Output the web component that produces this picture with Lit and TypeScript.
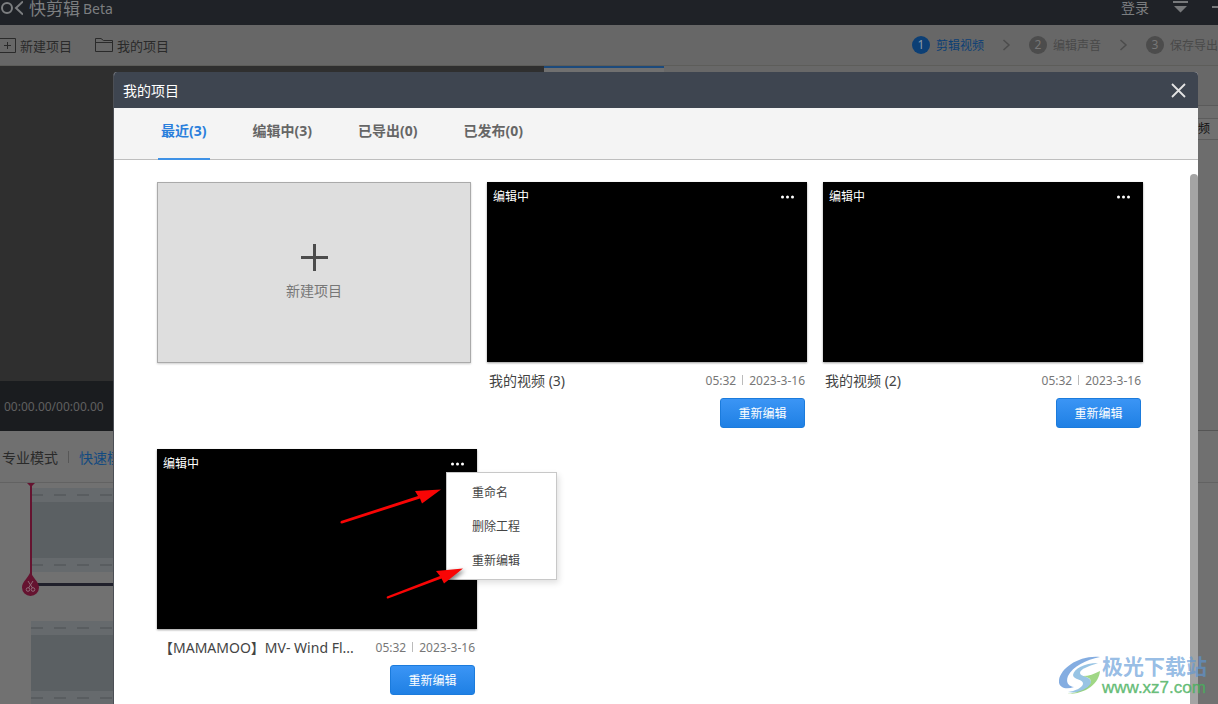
import { LitElement, html, css, svg, nothing } from "lit";
import { customElement, property, state } from "lit/decorators.js";

interface Project {
  name: string;
  duration: string;
  date: string;
  menuOpen?: boolean;
}

const PROJECTS: Project[] = [
  { name: "我的视频 (3)", duration: "05:32", date: "2023-3-16" },
  { name: "我的视频 (2)", duration: "05:32", date: "2023-3-16" },
  { name: "【MAMAMOO】MV- Wind Fl...", duration: "05:32", date: "2023-3-16", menuOpen: true },
];

const TABS = ["最近(3)", "编辑中(3)", "已导出(0)", "已发布(0)"];
const STEPS = ["剪辑视频", "编辑声音", "保存导出"];

const reset = css`
  * {
    box-sizing: border-box;
  }
  button {
    margin: 0;
    padding: 0;
    border: 0;
    background: none;
    font: inherit;
    color: inherit;
    white-space: nowrap;
  }
  svg {
    display: block;
    flex: none;
  }
`;

@customElement("project-card")
class ProjectCard extends LitElement {
  @property({ attribute: false }) project!: Project;

  static styles = [
    reset,
    css`
      :host {
        display: block;
        position: relative;
        width: 320px;
      }
      .thumb {
        display: flex;
        justify-content: space-between;
        align-items: flex-start;
        height: 180px;
        padding: 5px 12px 0 6px;
        background: #000;
        box-shadow: 0 1px 2px rgba(0, 0, 0, 0.4);
        color: #fff;
        font-size: 12px;
        line-height: 20px;
      }
      .more {
        padding: 8px 0;
      }
      .info {
        display: flex;
        justify-content: space-between;
        align-items: center;
        height: 36px;
        padding: 0 2px;
        white-space: nowrap;
      }
      .name {
        font-size: 14px;
        color: #444;
      }
      .meta {
        display: flex;
        align-items: center;
        gap: 6px;
        font-size: 12px;
        color: #777;
      }
      .bar {
        width: 1px;
        height: 10px;
        background: #bbb;
      }
      .actions {
        display: flex;
        justify-content: flex-end;
        padding-right: 2px;
      }
      .edit {
        width: 85px;
        height: 30px;
        border: 1px solid #1b7bdc;
        border-radius: 3px;
        background: linear-gradient(#3b95f5, #1f80e4);
        color: #fff;
        font-size: 12px;
      }
      .menu {
        position: absolute;
        left: 289px;
        top: 23px;
        width: 111px;
        padding: 2px 0;
        background: #fff;
        border: 1px solid #c8c8c8;
        box-shadow: 2px 3px 6px rgba(0, 0, 0, 0.12);
      }
      .item {
        display: block;
        width: 100%;
        height: 34px;
        padding-left: 25px;
        text-align: left;
        font-size: 12px;
        color: #444;
      }
      .arrows {
        position: absolute;
        left: 180px;
        top: 36px;
        filter: drop-shadow(2px 2px 2px rgba(0, 0, 0, 0.5));
      }
    `,
  ];

  render() {
    const p = this.project;
    return html`
      <div class="thumb">
        <span>编辑中</span>
        <button class="more" aria-label="更多">
          <svg width="15" height="4" viewBox="0 0 15 4" fill="#fff">
            <circle cx="2.5" cy="2" r="1.5" /><circle cx="7.5" cy="2" r="1.5" /><circle cx="12.5" cy="2" r="1.5" />
          </svg>
        </button>
      </div>
      <div class="info">
        <span class="name">${p.name}</span>
        <span class="meta"><span>${p.duration}</span><i class="bar"></i><span>${p.date}</span></span>
      </div>
      <div class="actions"><button class="edit">重新编辑</button></div>
      ${p.menuOpen
        ? html`
            <div class="menu">
              <button class="item">重命名</button>
              <button class="item">删除工程</button>
              <button class="item">重新编辑</button>
            </div>
            <svg class="arrows" width="130" height="118" viewBox="0 0 130 118" fill="#f80505">
              <path d="M4 36 L81 11 L78 6 L104 4.500 L85 18.500 L83 13.500 L5 38.500 Q2.500 38.500 4 36Z" />
              <path d="M50 111.500 L103 91 L99 86 L126 83.500 L107 98.500 L104.500 93.500 L51 113.500 Q49 113.500 50 111.500Z" />
            </svg>
          `
        : nothing}
    `;
  }
}

@customElement("projects-dialog")
class ProjectsDialog extends LitElement {
  @state() private active = 0;

  static styles = [
    reset,
    css`
      :host {
        display: flex;
        flex-direction: column;
        background: #fff;
        border-radius: 4px 4px 0 0;
        overflow: hidden;
      }
      .head {
        flex: none;
        display: flex;
        align-items: center;
        justify-content: space-between;
        height: 36px;
        padding: 0 12px 0 9px;
        background: #3e4550;
        color: #fff;
        font-size: 14px;
      }
      .tabs {
        flex: none;
        display: flex;
        gap: 40px;
        height: 52px;
        padding-left: 44px;
        background: #f4f4f4;
        border-bottom: 1px solid #bebebe;
      }
      .tab {
        height: 52px;
        padding: 0 3px 6px;
        border-bottom: 2px solid transparent;
        font-size: 14px;
        font-weight: bold;
        color: #666;
      }
      .tab.on {
        color: #2a7fdc;
        border-bottom-color: #3f92e6;
      }
      .body {
        flex: 1;
        min-height: 0;
        display: flex;
        overflow: hidden;
      }
      .grid {
        flex: 1;
        display: flex;
        flex-wrap: wrap;
        align-content: flex-start;
        gap: 21px 16px;
        padding: 22px 40px 0 43px;
      }
      .new {
        display: flex;
        flex-direction: column;
        align-items: center;
        justify-content: center;
        gap: 10px;
        width: 314px;
        height: 181px;
        border: 1px solid #aaa;
        background: #dedede;
        box-shadow: 0 1px 2px rgba(0, 0, 0, 0.2);
        font-size: 14px;
        line-height: 20px;
        color: #777;
      }
      .track {
        flex: none;
        width: 8px;
        padding-top: 14px;
      }
      .grip {
        height: 100%;
        border-radius: 4px 4px 0 0;
        background: #a4a4a4;
      }
    `,
  ];

  render() {
    return html`
      <header class="head">
        <span>我的项目</span>
        <button aria-label="关闭">
          <svg width="15" height="15" viewBox="0 0 15 15" stroke="#e4e4e4" stroke-width="1.8" fill="none">
            <path d="M1 1 L14 14 M14 1 L1 14" />
          </svg>
        </button>
      </header>
      <nav class="tabs">
        ${TABS.map(
          (t, i) => html`<button class="tab ${i === this.active ? "on" : ""}" @click=${() => (this.active = i)}>${t}</button>`
        )}
      </nav>
      <div class="body">
        <div class="grid">
          <button class="new">
            <svg width="27" height="27" viewBox="0 0 27 27" fill="#4c4c4c">
              <path d="M12 0h3v12h12v3H15v12h-3V15H0v-3h12z" />
            </svg>
            <span>新建项目</span>
          </button>
          ${PROJECTS.map((p) => html`<project-card .project=${p}></project-card>`)}
        </div>
        <div class="track"><div class="grip"></div></div>
      </div>
    `;
  }
}

@customElement("app-root")
class AppRoot extends LitElement {
  static styles = [
    reset,
    css`
      :host {
        position: relative;
        display: flex;
        flex-direction: column;
        height: 100vh;
        overflow: hidden;
        background: #6e6e6e;
        font-family: "Noto Sans", "Noto Sans CJK SC", sans-serif;
        font-size: 14px;
        color: #2a2a2a;
        white-space: nowrap;
      }
      .title {
        flex: none;
        display: flex;
        justify-content: space-between;
        height: 25px;
        background: #1f2227;
        color: #7c7e80;
        line-height: 16px;
      }
      .brand,
      .window {
        display: flex;
        align-items: flex-start;
      }
      .brand svg {
        margin-top: 1px;
      }
      .product {
        margin-left: 6px;
        font-size: 17px;
        line-height: 18px;
      }
      .beta {
        margin-left: 3px;
        line-height: 18px;
      }
      .window {
        gap: 24px;
      }
      .tools {
        flex: none;
        display: flex;
        align-items: center;
        justify-content: space-between;
        height: 41px;
        background: #676767;
        border-bottom: 1px solid #5d5d5a;
        font-size: 13px;
      }
      .group,
      .tool,
      .steps,
      .step {
        display: flex;
        align-items: center;
      }
      .group {
        gap: 23px;
      }
      .tool {
        gap: 4px;
      }
      .steps {
        gap: 18px;
        font-size: 12px;
        color: #494949;
      }
      .step {
        gap: 6px;
      }
      .num {
        width: 18px;
        height: 18px;
        border-radius: 9px;
        background: #4c4c4c;
        color: #777;
        text-align: center;
        line-height: 18px;
      }
      .step.on {
        color: #0c3f75;
      }
      .step.on .num {
        background: #0c3f75;
        color: #8a9aac;
      }
      .work {
        flex: 1;
        min-height: 0;
        display: grid;
        grid-template-columns: 544px 1fr;
      }
      .player {
        display: flex;
        flex-direction: column;
        background: #2f2f2f;
      }
      .screen {
        flex: 1;
      }
      .time {
        height: 50px;
        padding-left: 4px;
        background: #1a1c1f;
        color: #606060;
        font-size: 12px;
        line-height: 52px;
      }
      .library {
        background: #6d6d6d;
        border-bottom: 1px solid #555;
      }
      .libtabs {
        height: 40px;
        background: #686868;
        border-bottom: 1px solid #5a5a5a;
      }
      .libtab {
        width: 120px;
        height: 39px;
        border-top: 2px solid #1c4a7c;
        background: #707070;
      }
      .filter {
        height: 22px;
        margin-top: 12px;
        padding-right: 8px;
        border: solid #5c5c5c;
        border-width: 1px 0;
        background: #707070;
        color: #111;
        font-size: 12px;
        line-height: 20px;
        text-align: right;
      }
      .modes {
        flex: none;
        display: flex;
        align-items: center;
        gap: 10px;
        height: 52px;
        padding-left: 2px;
        background: #707070;
        border-bottom: 1px solid #626262;
      }
      .sep {
        width: 1px;
        height: 12px;
        background: #575757;
      }
      .fast {
        color: #124a80;
      }
      .timeline {
        flex: none;
        display: flex;
        height: 221px;
        padding-right: 24px;
        background: #717171;
      }
      .head {
        z-index: 1;
        flex: none;
        margin-left: 22px;
        width: 9px;
        overflow: visible;
      }
      .tracks {
        flex: 1;
        padding-top: 5px;
      }
      .clip {
        height: 84px;
        padding: 6px 0;
        background: #666a6d;
      }
      .dashes {
        height: 2px;
        background: repeating-linear-gradient(90deg, #595d60 0 12px, transparent 12px 23px);
      }
      .fill {
        height: 56px;
        margin: 6px 0;
        background: #5b6063;
      }
      .line {
        height: 3px;
        margin: 11px 0 35px;
        background: #20202b;
      }
      .dialog {
        position: absolute;
        left: 113px;
        right: 20px;
        top: 72px;
        bottom: 0;
        border-left: 1px solid #4c4f55;
      }
      .mark {
        position: absolute;
        right: 11px;
        bottom: 6px;
        display: flex;
        align-items: center;
      }
      .site {
        font-size: 21px;
        line-height: 24px;
        font-weight: bold;
        color: rgba(92, 151, 214, 0.65);
      }
      .url {
        font-family: "Liberation Sans", sans-serif;
        font-size: 17px;
        line-height: 20px;
        color: rgba(72, 176, 92, 0.8);
        -webkit-text-stroke: 0.5px rgba(72, 176, 92, 0.6);
      }
    `,
  ];

  private chevron() {
    return html`<svg width="9" height="12" viewBox="0 0 9 12" fill="none" stroke="#4c4c4c" stroke-width="1.5"><path d="M1.500 1 L7 6 L1.500 11" /></svg>`;
  }

  render() {
    return html`
      <header class="title">
        <div class="brand">
          <svg width="23" height="15" viewBox="0 0 23 15" fill="none" stroke="#7c7e80" stroke-width="2">
            <circle cx="7" cy="7" r="5" /><path d="M23 0.500 L16 7 L23 13.500" />
          </svg>
          <span class="product">快剪辑</span><span class="beta">Beta</span>
        </div>
        <div class="window">
          <button>登录</button>
          <svg width="15" height="13" viewBox="0 0 15 13" fill="#77797b"><path d="M0 1h15v2H0z M1 6h13l-6.500 6.500z" /></svg>
          <svg width="6" height="13" viewBox="0 0 6 13" fill="#77797b"><path d="M0 6h6v2H0z" /></svg>
        </div>
      </header>
      <div class="tools">
        <div class="group">
          <button class="tool">
            <svg width="16" height="15" viewBox="0 0 16 15" fill="none" stroke="#2a2a2a"><path d="M-1 0.500H15.500V14.500H-1 M4 7.500H11 M7.500 4V11" /></svg>
            <span>新建项目</span>
          </button>
          <button class="tool">
            <svg width="18" height="14" viewBox="0 0 18 14" fill="none" stroke="#2a2a2a"><path d="M0.500 13.500V0.500H6L8.500 2.500H17.500V13.500Z M0.500 4.500H17.500" /></svg>
            <span>我的项目</span>
          </button>
        </div>
        <div class="steps">
          ${STEPS.map(
            (s, i) => html`${i ? this.chevron() : nothing}
              <div class="step ${i ? "" : "on"}"><span class="num">${i + 1}</span><span>${s}</span></div>`
          )}
        </div>
      </div>
      <main class="work">
        <section class="player"><div class="screen"></div><div class="time">00:00.00/00:00.00</div></section>
        <section class="library">
          <div class="libtabs"><div class="libtab"></div></div>
          <div class="filter">频</div>
        </section>
      </main>
      <div class="modes"><button>专业模式</button><i class="sep"></i><button class="fast">快速模式</button></div>
      <section class="timeline">
        <svg class="head" viewBox="0 0 9 113" width="9" height="113">
          ${svg`<path d="M5 0h8l-4 4z M8 2h2v90H8z" fill="#651330" />
          <path d="M8.500 88 C10 95 17 98 17 104.500 A8.500 8.500 0 0 1 0 104.500 C0 98 7 95 8.500 88Z" fill="#651330" />
          <g fill="none" stroke="#8f6b78"><path d="M6 98 L10.500 105 M11 98 L6.500 105" /><circle cx="6" cy="106.500" r="1.800" /><circle cx="11" cy="106.500" r="1.800" /></g>`}
        </svg>
        <div class="tracks">
          <div class="clip"><div class="dashes"></div><div class="fill"></div><div class="dashes"></div></div>
          <div class="line"></div>
          <div class="clip"><div class="dashes"></div><div class="fill"></div><div class="dashes"></div></div>
        </div>
      </section>
      <projects-dialog class="dialog"></projects-dialog>
      <div class="mark">
        <svg width="43" height="40" viewBox="0 0 43 40" fill="none">
          <path d="M41 1 C20 -1 2 12 0 24 C-1 32 7 34 15 31 C8 30 7 25 9 20 C14 10 27 4 41 1Z" fill="#6f9fdc" opacity=".85" />
          <path d="M39 7 C25 7 15 13 14 19 C14 24 25 23 24 28 C23 32 16 35 9 36 C20 38 32 33 32 26 C32 20 21 21 21 17 C21 13 30 10 39 7Z" fill="#86badf" opacity=".85" />
          <path d="M24 20 C30 20 35 18 41 15 C40 27 28 38 8 38 C17 37 31 33 32 26 C32 22 28 21 24 20Z" fill="#8fd070" opacity=".85" />
        </svg>
        <div><div class="site">极光下载站</div><div class="url">www.xz7.com</div></div>
      </div>
    `;
  }
}
